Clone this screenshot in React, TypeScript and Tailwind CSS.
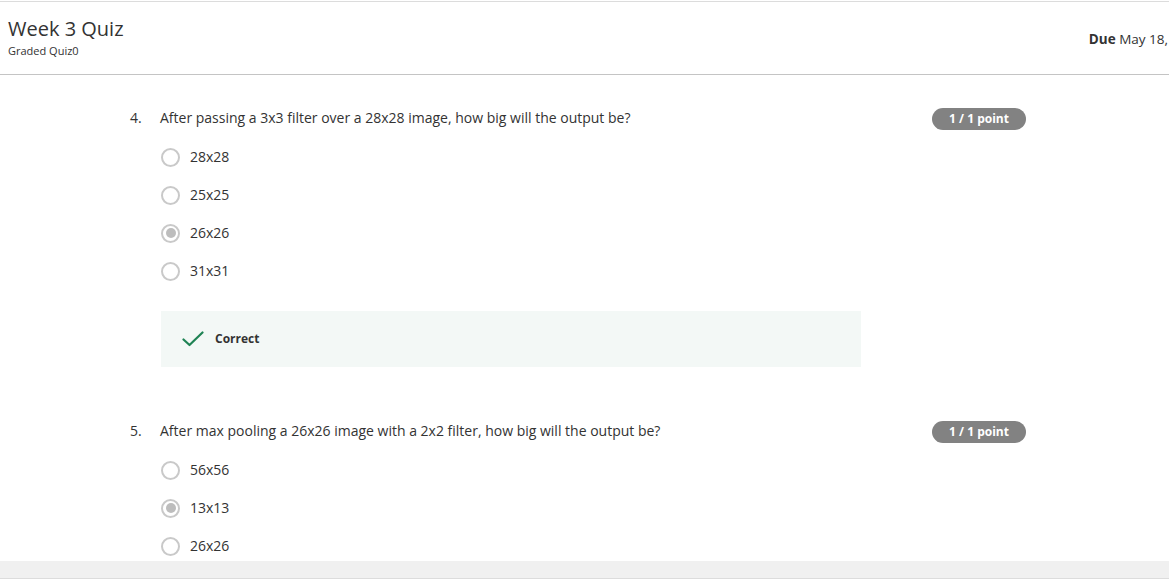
import React from "react";

type Question = {
  num: number;
  text: string;
  options: string[];
  selected: number;
  feedback?: boolean;
};

const questions: Question[] = [
  {
    num: 4,
    text: "After passing a 3x3 filter over a 28x28 image, how big will the output be?",
    options: ["28x28", "25x25", "26x26", "31x31"],
    selected: 2,
    feedback: true,
  },
  {
    num: 5,
    text: "After max pooling a 26x26 image with a 2x2 filter, how big will the output be?",
    options: ["56x56", "13x13", "26x26"],
    selected: 1,
  },
];

const Radio = ({ checked }: { checked: boolean }) => (
  <span className="w-[19px] h-[19px] rounded-full border-2 border-[#c9c9c9] flex items-center justify-center shrink-0">
    {checked && <span className="w-[10px] h-[10px] rounded-full bg-[#bdbdbd]"></span>}
  </span>
);

const Check = () => (
  <svg width="22" height="16" viewBox="0 0 22 16" fill="none">
    <path d="M1.5 8.5 L7.5 14 L20.5 1.5" stroke="#1f8354" strokeWidth="2.2" strokeLinecap="round" strokeLinejoin="round" />
  </svg>
);

const QuestionBlock = ({ q, first }: { q: Question; first: boolean }) => (
  <div className={first ? "pt-[33px]" : "mt-[54px]"}>
    <div className="flex items-center h-[22px] w-[896px]">
      <span className="w-[30px] text-[14px] leading-[20px] -mt-[2px] text-[#333]">{q.num}.</span>
      <span className="flex-1 text-[14px] leading-[20px] -mt-[2px] text-[#333]">{q.text}</span>
      <span className="w-[94px] h-[22px] rounded-full bg-[#828282] text-white text-[12px] font-bold flex items-center justify-center">
        1 / 1 point
      </span>
    </div>
    <div className="mt-[8px] pl-[31px]">
      {q.options.map((o, i) => (
        <div key={o} className="h-[38px] flex items-center gap-[10px]">
          <Radio checked={i === q.selected} />
          <span className="text-[14px] leading-[20px] -mt-px text-[#333]">{o}</span>
        </div>
      ))}
    </div>
    {q.feedback && (
      <div className="ml-[31px] mt-[21px] w-[700px] h-[56px] bg-[#f3f8f6] flex items-center pl-[21px] gap-[11px]">
        <Check />
        <span className="text-[12px] font-bold text-[#333]">Correct</span>
      </div>
    )}
  </div>
);

export default function App() {
  return (
    <div
      className="h-[581px] w-[1169px] overflow-hidden flex flex-col bg-white"
      style={{ fontFamily: '"Open Sans", "Liberation Sans", sans-serif' }}
    >
      <header className="mt-px h-[74px] border-t border-b border-[#dcdcdc] border-b-[#c4c4c4] flex items-center shrink-0 overflow-hidden">
        <div className="pl-[8px] -mt-[2px]">
          <h1 className="text-[20px] leading-[28px] text-[#333]">Week 3 Quiz</h1>
          <p className="text-[11px] leading-[16px] text-[#333]">Graded Quiz0</p>
        </div>
        <div className="ml-auto pr-[1px] whitespace-nowrap text-[13.5px] text-[#333] mt-[2px]">
          <span className="font-bold">Due</span> May 18,
        </div>
      </header>
      <main className="flex-1 overflow-hidden pl-[130px]">
        {questions.map((q, i) => (
          <QuestionBlock key={q.num} q={q} first={i === 0} />
        ))}
      </main>
      <footer className="h-[18px] shrink-0 bg-[#f0f0f0] border-b border-[#dcdcdc] mb-[2px]"></footer>
    </div>
  );
}
